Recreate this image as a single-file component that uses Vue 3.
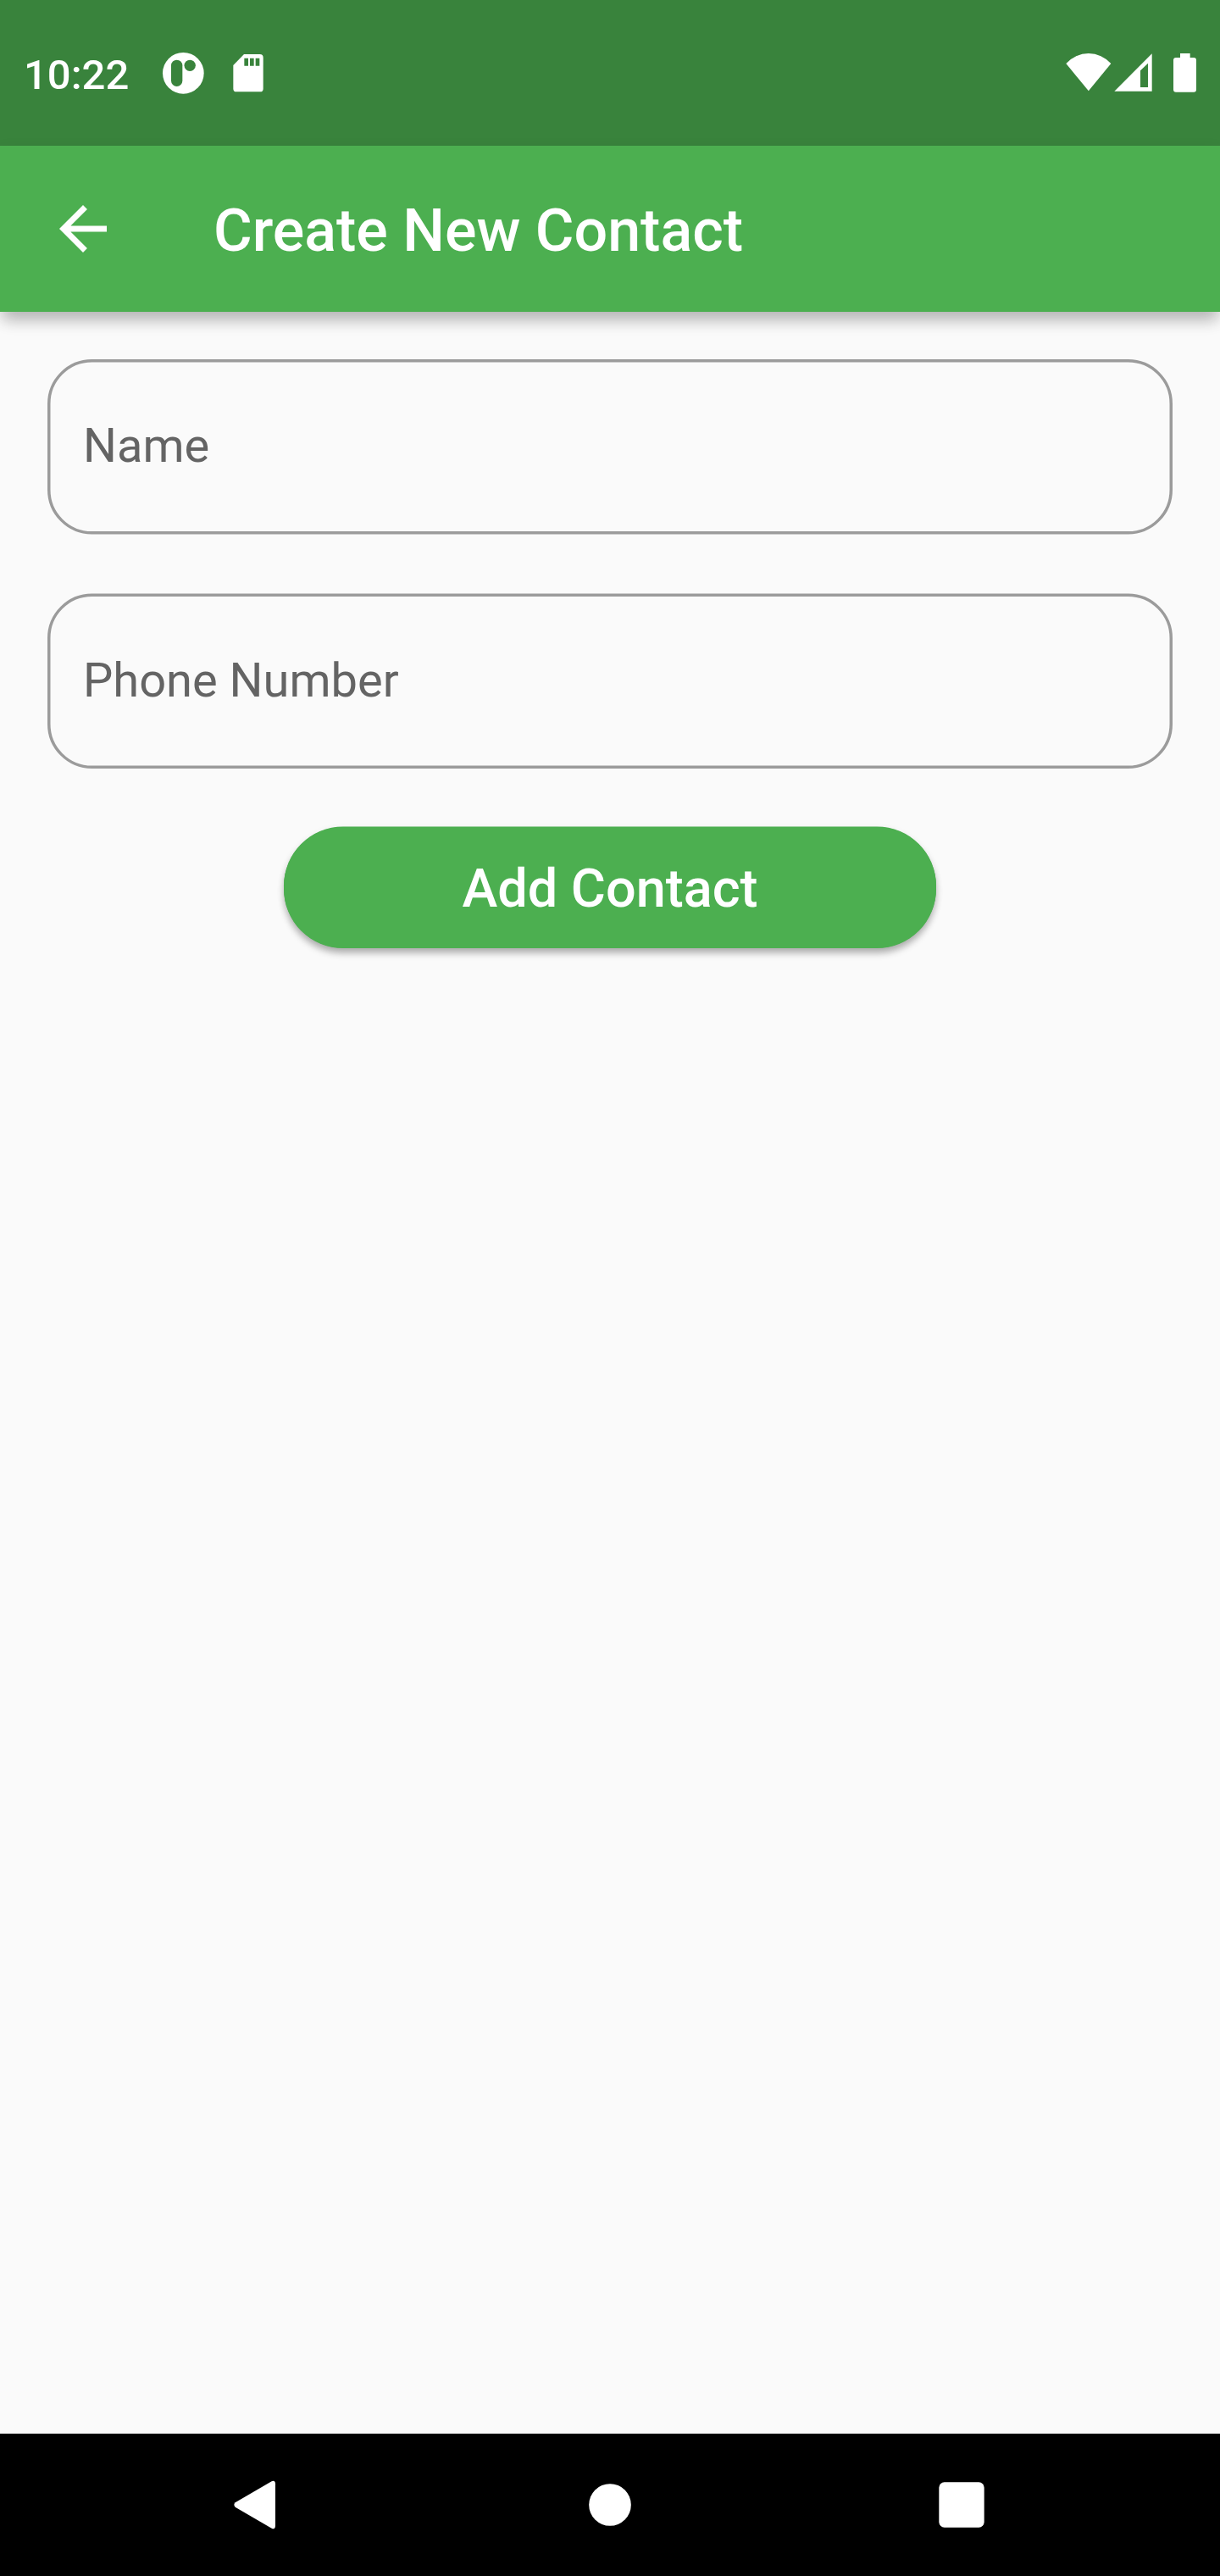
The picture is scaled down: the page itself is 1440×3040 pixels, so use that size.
<script setup>
// `shift` moves an outline by the half pixel left over from 3.5x density.
const fields = [
  { id: 'name', label: 'Name', shift: 0 },
  { id: 'phone', label: 'Phone Number', shift: 0.5 },
]
</script>

<template>
  <div class="screen">
    <header class="status">
      <span class="clock">10:22</span>
      <svg class="app-icon" width="50" height="50" viewBox="0 0 150 150">
        <circle cx="76" cy="76" r="73" fill="#fff" />
        <rect x="33" y="29" width="40" height="94" rx="20" fill="#39833c" />
        <circle cx="99.500" cy="49" r="20" fill="#39833c" />
      </svg>
      <svg class="sd" width="36" height="46" viewBox="0 0 108 138">
        <path fill="#fff" d="M39 3H95Q107 3 107 15V125Q107 136 96 136H12Q1 136 1 125V42z" />
        <path fill="#39833c" d="M40 17h14v27H40zM60 17h14v27H60zM80 17h14v27H80z" />
      </svg>
      <span class="spacer"></span>
      <svg class="wifi" width="54" height="46" viewBox="0 0 162 138">
        <path fill="#fff" d="M1 39A106 106 0 0 1 160 39L80.500 136z" />
      </svg>
      <svg class="signal" width="46" height="46" viewBox="0 0 138 138">
        <path fill="#fff" fill-rule="evenodd" d="M1 137L134 4V137zM93 64V123H120V38z" />
      </svg>
      <svg class="battery" width="28" height="47" viewBox="-1 0 84 141">
        <path
          fill="#fff"
          d="M26 3H61V18H74Q83 18 83 27V131Q83 140 74 140H11Q2 140 2 131V27Q2 18 11 18H26z"
        />
      </svg>
    </header>

    <div class="appbar">
      <svg class="back" width="84" height="84" viewBox="0 0 24 24">
        <path fill="#fff" d="M20 11H7.830l5.590-5.590L12 4l-8 8 8 8 1.410-1.410L7.830 13H20v-2z" />
      </svg>
      <h1>Create New Contact</h1>
    </div>

    <main class="body">
      <div v-for="f in fields" :key="f.id" class="field" :class="f.id">
        <svg class="outline" width="1328" height="207" viewBox="0 0 1328 207">
          <rect
            x="1.750"
            :y="1.75 + f.shift"
            width="1324.500"
            height="203"
            rx="50.750"
            fill="none"
            stroke="#9b9b9b"
            stroke-width="3.500"
          />
        </svg>
        <span class="label">{{ f.label }}</span>
      </div>
      <button class="add" type="button">Add Contact</button>
    </main>

    <nav class="nav">
      <svg width="56" height="60" viewBox="3 0 168 180">
        <path
          fill="#fff"
          d="M8 82L137 7Q143 4 147 7Q150 10 150 16V164Q150 170 147 173Q143 176 137 173L8 98Q0 90 8 82z"
        />
      </svg>
      <svg width="56" height="60" viewBox="0 0 168 180">
        <circle cx="84" cy="90" r="74.500" fill="#fff" />
      </svg>
      <svg width="56" height="60" viewBox="0 0 168 180">
        <rect x="4" y="10" width="160" height="160" rx="19" fill="#fff" />
      </svg>
    </nav>
  </div>
</template>

<style>
body {
  margin: 0;
  background: #fafafa;
}
</style>

<style scoped>
.screen {
  display: flex;
  flex-direction: column;
  width: 1440px;
  height: 3040px;
  overflow: hidden;
  background: #fafafa;
  font-family: Roboto, "Noto Sans", sans-serif;
}
svg {
  display: block;
  flex: none;
}
.status {
  display: flex;
  align-items: flex-start;
  box-sizing: border-box;
  flex: none;
  height: 172px;
  padding: 0 28px;
  background: #39833c;
}
.clock {
  width: 163px;
  margin-top: 60px;
  font-size: 49px;
  line-height: 58px;
  font-weight: 500;
  color: #fff;
}
.app-icon {
  margin-top: 61px;
}
.sd {
  margin: 63px 0 0 34px;
}
.spacer {
  flex: 1;
}
.wifi,
.signal,
.battery {
  margin-top: 62px;
}
.wifi {
  margin-right: 3px;
}
.signal {
  margin-right: 23px;
}
.appbar {
  display: flex;
  align-items: center;
  box-sizing: border-box;
  flex: none;
  height: 196px;
  padding-left: 56px;
  background: #4caf50;
  box-shadow: 0 14px 17.5px -3.5px rgba(0, 0, 0, 0.18), 0 8px 17.5px rgba(0, 0, 0, 0.13);
}
h1 {
  margin: 4px 0 0 112px;
  font-size: 70px;
  line-height: 82px;
  font-weight: 500;
  white-space: nowrap;
  color: #fff;
}
.body {
  display: flex;
  flex-direction: column;
  align-items: center;
  flex: 1;
  padding-top: 56px;
}
.field {
  display: grid;
  align-items: start;
  width: 1328px;
  height: 207px;
  margin-bottom: 69px;
}
.outline,
.label {
  grid-area: 1 / 1;
}
.label {
  padding: 69px 0 0 42px;
  font-size: 56px;
  line-height: 66px;
  color: #646464;
}
.phone .label {
  padding-top: 70px;
}
.add {
  box-sizing: border-box;
  width: 770px;
  height: 143px;
  padding: 2px 0 0;
  border: 0;
  border-radius: 70px;
  background: #4caf50;
  box-shadow: 0 -0.5px 0 #4caf50, 0 7px 9px -1px rgba(0, 0, 0, 0.24), 0 3px 9px rgba(0, 0, 0, 0.12);
  font-family: inherit;
  font-size: 63px;
  font-weight: 500;
  line-height: 74px;
  color: #fff;
}
.nav {
  display: flex;
  align-items: center;
  justify-content: space-between;
  box-sizing: border-box;
  flex: none;
  height: 168px;
  padding: 0 277px 0 276px;
  background: #000;
}
</style>
